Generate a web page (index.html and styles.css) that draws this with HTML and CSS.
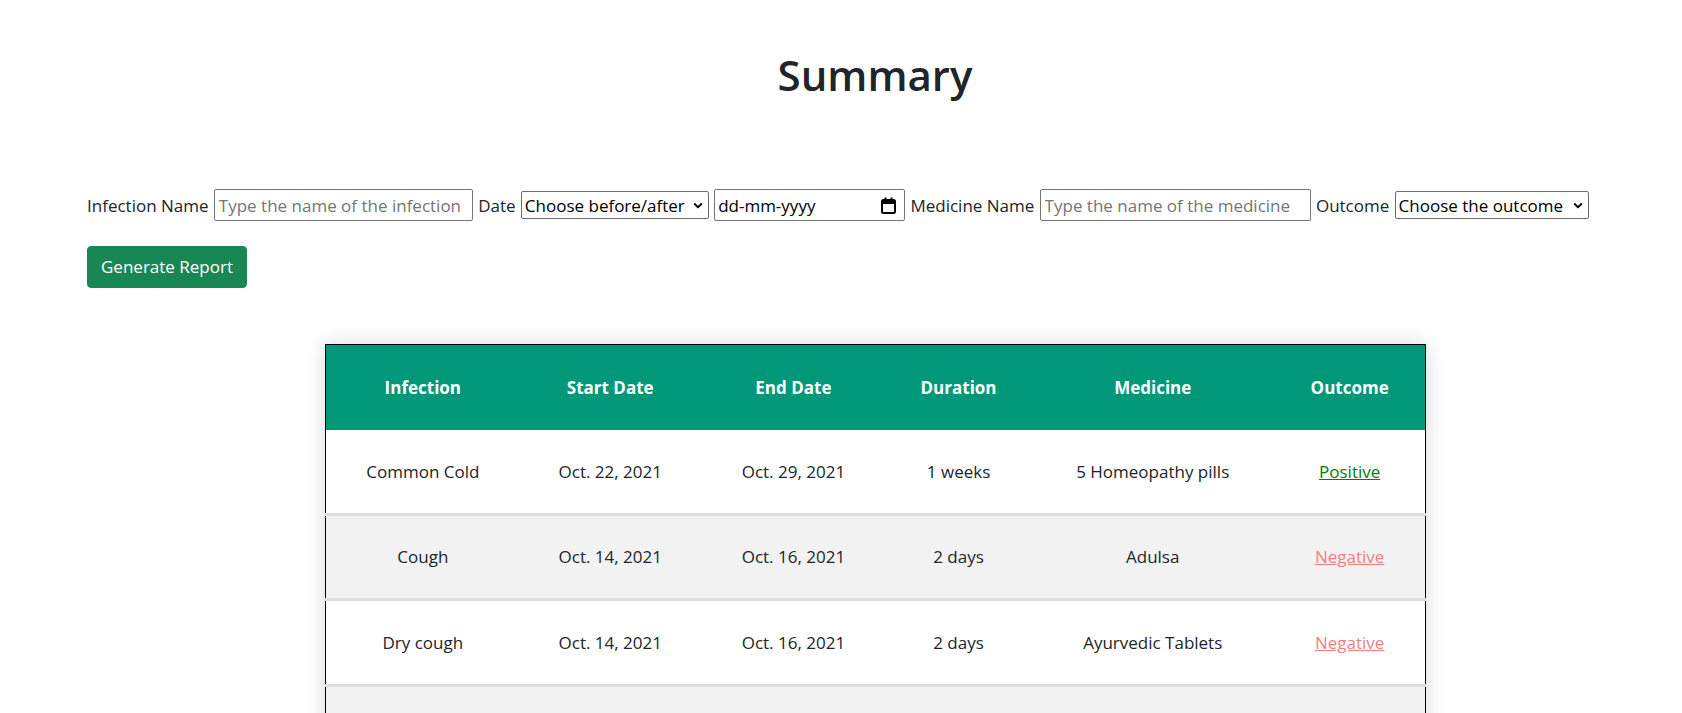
FILE: index.html
```html
<!DOCTYPE html>
<html lang="en">
<head>
<meta charset="utf-8">
<title>Summary</title>
<link rel="stylesheet" href="styles.css">
</head>
<body>
<main class="page">
  <h1 class="title">Summary</h1>
  <form class="filters">
    <div class="filter-row">
      <label class="lbl" for="inf">Infection Name</label>
      <input id="inf" class="txt txt-inf" type="text" placeholder="Type the name of the infection">
      <label class="lbl" for="when">Date</label>
      <span class="sel-wrap sel-date">
        <select id="when" class="sel"><option>Choose before/after</option></select>
        <svg class="chev" width="10" height="7" viewBox="0 0 10 7"><path d="M1.2 1.5 L5 5.2 L8.8 1.5" fill="none" stroke="#000" stroke-width="1.8"/></svg>
      </span>
      <span class="date-box">
        <span class="date-text">dd-mm-yyyy</span>
        <svg class="cal" width="15" height="17" viewBox="0 0 15 17"><rect x="1" y="3" width="13" height="13" rx="1.5" fill="none" stroke="#000" stroke-width="2"/><rect x="1" y="3" width="13" height="4" fill="#000"/><rect x="3.5" y="0.5" width="2" height="3.5" fill="#000"/><rect x="9.5" y="0.5" width="2" height="3.5" fill="#000"/></svg>
      </span>
      <label class="lbl" for="med">Medicine Name</label>
      <input id="med" class="txt txt-med" type="text" placeholder="Type the name of the medicine">
      <label class="lbl" for="out">Outcome</label>
      <span class="sel-wrap sel-out">
        <select id="out" class="sel"><option>Choose the outcome</option></select>
        <svg class="chev" width="10" height="7" viewBox="0 0 10 7"><path d="M1.2 1.5 L5 5.2 L8.8 1.5" fill="none" stroke="#000" stroke-width="1.8"/></svg>
      </span>
    </div>
    <button type="button" class="btn-generate">Generate Report</button>
  </form>

  <div class="table-area">
    <table class="summary">
      <colgroup>
        <col class="col-inf">
        <col class="col-start">
        <col class="col-end">
        <col class="col-dur">
        <col class="col-med">
        <col class="col-out">
      </colgroup>
      <thead>
        <tr>
          <th>Infection</th>
          <th>Start Date</th>
          <th>End Date</th>
          <th>Duration</th>
          <th>Medicine</th>
          <th>Outcome</th>
        </tr>
      </thead>
      <tbody>
        <tr>
          <td>Common Cold</td>
          <td>Oct. 22, 2021</td>
          <td>Oct. 29, 2021</td>
          <td>1 weeks</td>
          <td>5 Homeopathy pills</td>
          <td><a class="pos" href="#">Positive</a></td>
        </tr>
        <tr>
          <td>Cough</td>
          <td>Oct. 14, 2021</td>
          <td>Oct. 16, 2021</td>
          <td>2 days</td>
          <td>Adulsa</td>
          <td><a class="neg" href="#">Negative</a></td>
        </tr>
        <tr>
          <td>Dry cough</td>
          <td>Oct. 14, 2021</td>
          <td>Oct. 16, 2021</td>
          <td>2 days</td>
          <td>Ayurvedic Tablets</td>
          <td><a class="neg" href="#">Negative</a></td>
        </tr>
        <tr class="row-cut">
          <td></td>
          <td></td>
          <td></td>
          <td></td>
          <td></td>
          <td></td>
        </tr>
      </tbody>
    </table>
  </div>
</main>
</body>
</html>
```

FILE: styles.css
```css
html, body {
  margin: 0;
  padding: 0;
  background: #ffffff;
}

body {
  font-family: "Open Sans", "Noto Sans", sans-serif;
  font-size: 17px;
  line-height: 1.5;
  color: #212529;
}

.page {
  padding: 0 19px 0 87px;
}

.title {
  margin: 50px 0 0;
  text-align: center;
  font-size: 42px;
  font-weight: 600;
  line-height: 1.2;
  color: #212529;
}

.filters {
  margin: 0;
}

.filter-row {
  margin-top: 89px;
  display: flex;
  align-items: center;
  gap: 5.3px;
  height: 32px;
}

.lbl {
  white-space: nowrap;
}

.txt {
  box-sizing: border-box;
  height: 32px;
  padding: 1px 4px;
  border: 1px solid #767676;
  border-radius: 2px;
  font-family: inherit;
  font-size: 17px;
  color: #212529;
  background: #fff;
}

.txt::placeholder {
  color: #757575;
}

.txt-inf {
  width: 259px;
}

.txt-med {
  width: 271px;
}

.sel-wrap {
  position: relative;
  display: inline-block;
  height: 28px;
}

.sel {
  appearance: none;
  -webkit-appearance: none;
  box-sizing: border-box;
  height: 28px;
  padding: 0 20px 0 3px;
  border: 1px solid #6b6b6b;
  border-radius: 2px;
  background: #fff;
  font-family: inherit;
  font-size: 17px;
  color: #000;
}

.sel-date .sel {
  width: 188px;
}

.sel-out .sel {
  width: 194px;
}

.chev {
  position: absolute;
  right: 6px;
  top: 11px;
  pointer-events: none;
}

.date-box {
  box-sizing: border-box;
  width: 191px;
  height: 32px;
  display: inline-flex;
  align-items: center;
  justify-content: space-between;
  padding: 0 8px 0 3px;
  border: 1px solid #767676;
  border-radius: 2px;
  color: #000;
}

.cal {
  display: block;
}

.btn-generate {
  display: block;
  margin-top: 25px;
  box-sizing: border-box;
  height: 42px;
  padding: 0 13px;
  border: 1px solid #198754;
  border-radius: 4px;
  background: #198754;
  color: #ffffff;
  font-family: inherit;
  font-size: 17px;
  line-height: 40px;
}

.table-area {
  margin-top: 56px;
}

.summary {
  margin: 0 auto;
  width: 1101px;
  table-layout: fixed;
  border-collapse: collapse;
  border: 1px solid #000;
  box-shadow: 0 0 20px rgba(0, 0, 0, 0.15);
  font-size: 17px;
}

.col-inf { width: 195px; }
.col-start { width: 180px; }
.col-end { width: 186px; }
.col-dur { width: 144px; }
.col-med { width: 244px; }
.col-out { width: 150px; }

.summary thead tr {
  background: #009879;
  color: #ffffff;
}

.summary th {
  height: 85px;
  padding: 0 10px;
  font-weight: 700;
  text-align: center;
  vertical-align: middle;
}

.summary td {
  height: 82.5px;
  padding: 0 10px;
  text-align: center;
  vertical-align: middle;
}

.summary tbody tr {
  border-bottom: 3px solid #dddddd;
}

.summary tbody tr:nth-of-type(even) {
  background: #f2f2f2;
}

.pos {
  color: #008000;
  text-decoration: underline;
}

.neg {
  color: #f08080;
  text-decoration: underline;
}
```
